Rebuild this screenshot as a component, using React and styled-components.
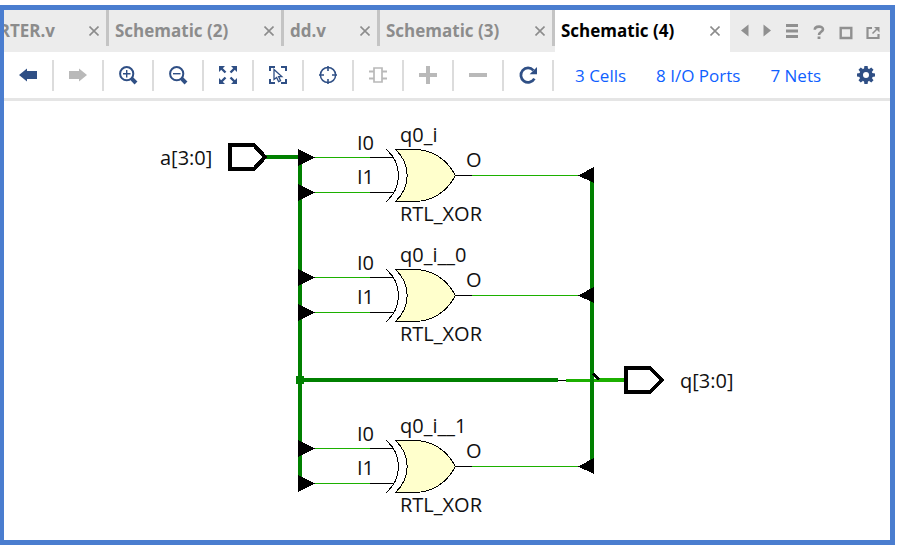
import React from "react";
import styled, { createGlobalStyle } from "styled-components";

const NAVY = "#2f4f85";
const MUTED = "#b9b9b9";
const BUS = "#008000";
const NET = "#1cb000";

const GlobalStyle = createGlobalStyle`
  * { box-sizing: border-box; }
  body {
    margin: 0;
    background: #ffffff;
    font-family: "Open Sans", "Noto Sans", sans-serif;
  }
`;

const Frame = styled.main`
  display: flex;
  flex-direction: column;
  margin: 5px 3px 8px 0;
  min-height: calc(100vh - 13px);
  border: 5px solid #4a7dcf;
  border-left-width: 4px;
  background: #ffffff;
`;

const TabBar = styled.div`
  display: flex;
  height: 42px;
  background: #ececec;
`;

const Tabs = styled.div`
  display: flex;
  flex: 1;
  min-width: 0;
  overflow: hidden;
`;

const Tab = styled.div`
  display: flex;
  align-items: center;
  justify-content: ${(p) => (p.$clipped ? "flex-end" : "space-between")};
  gap: ${(p) => (p.$clipped ? 34 : 0)}px;
  flex: none;
  width: ${(p) => p.$width}px;
  height: ${(p) => (p.$active ? 42 : 36)}px;
  padding: ${(p) => (p.$active ? "0 10px 0 6px" : "6px 7px 0 6px")};
  border-right: ${(p) => (p.$active ? 0 : 3)}px solid #c4c4c4;
  background: ${(p) => (p.$active ? "#ffffff" : "transparent")};
  overflow: hidden;
`;

const TabLabel = styled.button`
  flex: none;
  padding: 0;
  border: 0;
  background: none;
  font: 700 17px/24px "Open Sans", "Noto Sans", sans-serif;
  color: ${(p) => (p.$active ? "#000000" : "#8c8c8c")};
  white-space: nowrap;
`;

const IconButton = styled.button`
  display: flex;
  align-items: center;
  justify-content: center;
  flex: none;
  width: ${(p) => p.$width}px;
  padding: 0;
  border: 0;
  background: none;
  color: ${(p) => p.$color || "#909090"};

  svg {
    flex: none;
  }
`;

const WindowControls = styled.div`
  display: flex;
  flex: none;
  height: 42px;
  padding: 0 4px;
`;

const Toolbar = styled.div`
  display: flex;
  align-items: center;
  height: 49px;
  border-bottom: 3px solid #e5e5e5;
`;

const Tool = styled(IconButton)`
  width: 50px;
  height: 31px;
  border-right: 2px solid #dcdcdc;
`;

const Stats = styled.nav`
  display: flex;
  flex: 1;
  gap: 30px;
  padding: 2px 0 0 21px;
`;

const StatLink = styled.a`
  font-size: 17px;
  line-height: 24px;
  color: #0f5fff;
  text-decoration: none;
  white-space: nowrap;
`;

const Canvas = styled.section`
  flex: 1;
`;

const Drawing = styled.svg`
  display: block;
  width: 100%;
  height: auto;
`;

const Label = styled.text`
  font-family: "Open Sans", "Noto Sans", sans-serif;
  font-size: 20px;
  fill: #111111;
`;

const Icon = ({ children, size = 24 }) => (
  <svg width={size} height={size} viewBox={`0 0 ${size} ${size}`} fill="none" stroke="currentColor" aria-hidden="true">
    {children}
  </svg>
);

const CloseIcon = () => (
  <svg width="10" height="10" viewBox="0 0 10 10" stroke="#8c8c8c" strokeWidth="1.6" aria-hidden="true">
    <path d="M.5 .5 9.5 9.5M9.5 .5 .5 9.5" />
  </svg>
);

const filled = { fill: "currentColor", stroke: "none" };

const gearTeeth = [0, 45, 90, 135, 180, 225, 270, 315];

const tools = [
  { name: "Previous", icon: <path {...filled} d="M3 12 11 5.5V8H21V16H11V18.5Z" /> },
  { name: "Next", muted: true, icon: <path {...filled} d="M21 12 13 5.5V8H3V16H13V18.5Z" /> },
  {
    name: "Zoom in",
    icon: (
      <>
        <circle cx="10.7" cy="10.7" r="6.6" strokeWidth="2" />
        <path d="M7 10.7H14.5M10.7 7V14.5" strokeWidth="1.4" />
        <path d="M15.7 15.7 20 20" strokeWidth="4" />
      </>
    ),
  },
  {
    name: "Zoom out",
    icon: (
      <>
        <circle cx="10.7" cy="10.7" r="6.6" strokeWidth="2" />
        <path d="M7 10.7H14.5" strokeWidth="1.4" />
        <path d="M15.7 15.7 20 20" strokeWidth="4" />
      </>
    ),
  },
  {
    name: "Zoom fit",
    icon: (
      <>
        <path {...filled} d="M3 3H9L3 9ZM21 3H15L21 9ZM3 21H9L3 15ZM21 21H15L21 15Z" />
        <path d="M5 5 9.5 9.5M19 5 14.5 9.5M5 19 9.5 14.5M19 19 14.5 14.5" strokeWidth="2.4" />
      </>
    ),
  },
  {
    name: "Select area",
    icon: (
      <>
        <path d="M4 8V4H9M15 4H20V8M20 16V20H15M9 20H4V16" strokeWidth="2" />
        <path d="M8 6.5V16.5L10.6 14.4 12.6 18.6 14.6 17.6 12.6 13.6H15.8Z" strokeWidth="1.3" />
      </>
    ),
  },
  {
    name: "Locate",
    icon: (
      <>
        <circle cx="12" cy="12" r="7.6" strokeWidth="1.5" />
        <path d="M12 3V8M12 16V21M3 12H8M16 12H21" strokeWidth="1.6" />
      </>
    ),
  },
  {
    name: "Cell",
    muted: true,
    icon: (
      <>
        <path d="M8 5H16V19H8Z" strokeWidth="1.7" />
        <path d="M3 8.5H8M3 15.5H8M16 8.5H21M16 15.5H21" strokeWidth="1.9" />
      </>
    ),
  },
  { name: "Expand", muted: true, icon: <path d="M3 12H21M12 3V21" strokeWidth="4" /> },
  { name: "Collapse", muted: true, icon: <path d="M3 12H21" strokeWidth="4" /> },
  {
    name: "Reload",
    icon: (
      <>
        <path d="M17.4 7.3A7.2 7.2 0 1 0 18.4 15.6" strokeWidth="2.7" />
        <path {...filled} d="M21 4V11.2H13.6Z" />
      </>
    ),
  },
];

const tabs = [
  { label: "RTER.v", width: 105, clipped: true },
  { label: "Schematic (2)", width: 175 },
  { label: "dd.v", width: 96 },
  { label: "Schematic (3)", width: 175 },
  { label: "Schematic (4)", width: 175, active: true },
];

const controls = [
  { name: "Previous tab", width: 22, icon: <path {...filled} d="M15.500 5.500V17.500L8 11.500Z" /> },
  { name: "Next tab", width: 22, icon: <path {...filled} d="M8.500 5.500V17.500L16 11.500Z" /> },
  { name: "Tab list", width: 27, icon: <path d="M6 6.5H18M6 12H18M6 17.5H18" strokeWidth="3" /> },
  {
    name: "Help",
    width: 27,
    icon: (
      <>
        <path d="M7.8 10.8C7.8 6.6 16.2 6.6 16 10.4 15.9 12.8 12 12.8 12 16" strokeWidth="2.6" />
        <path d="M12 17.5V20" strokeWidth="2.8" />
      </>
    ),
  },
  { name: "Maximize", width: 27, icon: <path d="M6.700 9H17.300V19H6.700Z" strokeWidth="2.400" /> },
  {
    name: "Float",
    width: 27,
    icon: (
      <>
        <path d="M11 9H6.500V19H17.500V15" strokeWidth="2.200" />
        <path d="M11.5 14.5 16.5 9.5" strokeWidth="1.6" />
        <path {...filled} d="M13 8H18.5V13.5Z" />
      </>
    ),
  },
];

const XorGate = ({ y, name }) => (
  <g transform={`translate(0 ${y})`}>
    <g fill="none" shapeRendering="crispEdges">
      <path d="M315 157.5H370M315 192.5H370M472 175.5H579" stroke={NET} />
      <path d="M370 157.5H394M370 192.5H394M455 175.5H472" stroke="#000" />
      <path d="M386.5 149.5C402.5 164 402.5 187 386.5 201.5" stroke="#000" />
      <path
        d="M395.5 149.5H415C434 150 447 160 455.5 175.5 447 191 434 201 415 201.5H395.5C411 187 411 164 395.5 149.5Z"
        fill="#ffffcc"
        stroke="#000"
      />
    </g>
    <path d="M298 149 315 157.5 298 166ZM298 184 315 192.5 298 201ZM594 167 578 175.5 594 183Z" fill="#000" shapeRendering="crispEdges" />
    <Label x="357" y="150">I0</Label>
    <Label x="357" y="184">I1</Label>
    <Label x="400" y="142">{name}</Label>
    <Label x="466" y="167">O</Label>
    <Label x="400" y="221">RTL_XOR</Label>
  </g>
);

const Schematic = () => (
  <Drawing viewBox="4 101 886 439" role="img" aria-label="Schematic (4)">
    <g fill="none" shapeRendering="crispEdges">
      <path d="M265 157H300V483" stroke={BUS} strokeWidth="4" />
      <path d="M300 380H558" stroke={BUS} strokeWidth="4" />
      <path d="M296 376H304V384H296Z" fill={BUS} />
      <path d="M558 380.5H566" stroke="#000" />
      <path d="M566 380.5H600" stroke={NET} strokeWidth="3" />
      <path d="M600 380H626" stroke={NET} strokeWidth="4" />
      <path d="M592 175V466" stroke={BUS} strokeWidth="4" />
      <path d="M593 373.5 599 379.5" stroke="#000" strokeWidth="3" />
      <path d="M230 145H254L265 157 254 169H230Z" stroke="#000" strokeWidth="4" />
      <path d="M626 368H650L662 380 650 392H626Z" stroke="#000" strokeWidth="4" />
    </g>
    <Label x="160" y="165">a[3:0]</Label>
    <Label x="680" y="388">q[3:0]</Label>
    <XorGate y={0} name="q0_i" />
    <XorGate y={120} name="q0_i__0" />
    <XorGate y={291} name="q0_i__1" />
  </Drawing>
);

export default function App() {
  return (
    <>
      <GlobalStyle />
      <Frame>
        <TabBar>
          <Tabs>
            {tabs.map((t) => (
              <Tab key={t.label} $width={t.width} $active={t.active} $clipped={t.clipped}>
                <TabLabel $active={t.active}>{t.label}</TabLabel>
                <IconButton $width={10} aria-label={`Close ${t.label}`}>
                  <CloseIcon />
                </IconButton>
              </Tab>
            ))}
          </Tabs>
          <WindowControls>
            {controls.map((c) => (
              <IconButton key={c.name} $width={c.width} aria-label={c.name}>
                <Icon>{c.icon}</Icon>
              </IconButton>
            ))}
          </WindowControls>
        </TabBar>
        <Toolbar>
          {tools.map((t) => (
            <Tool key={t.name} $color={t.muted ? MUTED : NAVY} aria-label={t.name}>
              <Icon>{t.icon}</Icon>
            </Tool>
          ))}
          <Stats>
            <StatLink href="#cells">3 Cells</StatLink>
            <StatLink href="#ports">8 I/O Ports</StatLink>
            <StatLink href="#nets">7 Nets</StatLink>
          </Stats>
          <IconButton $width={48} $color={NAVY} aria-label="Settings">
            <Icon>
              <circle cx="12" cy="12" r="4.900" strokeWidth="3.800" />
              {gearTeeth.map((a) => (
                <path key={a} {...filled} d="M10 6 10.400 3H13.600L14 6Z" transform={`rotate(${a} 12 12)`} />
              ))}
            </Icon>
          </IconButton>
        </Toolbar>
        <Canvas>
          <Schematic />
        </Canvas>
      </Frame>
    </>
  );
}
